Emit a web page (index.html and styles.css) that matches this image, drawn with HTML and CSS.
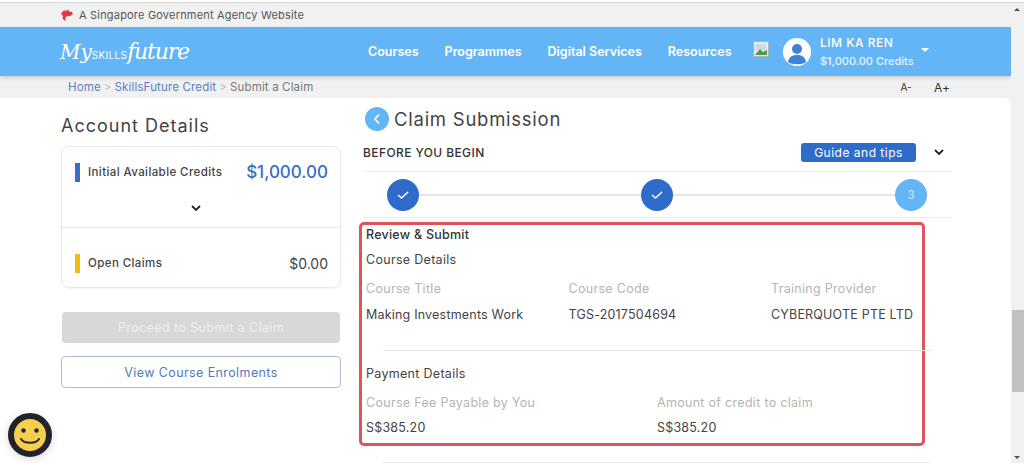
FILE: index.html
```html
<!DOCTYPE html>
<html lang="en">
<head>
    <meta charset="UTF-8">
    <meta name="viewport" content="width=device-width, initial-scale=1.0">
    <title>Claim Submission</title>
    <link rel="stylesheet" href="styles.css">
</head>
<body>
    <div class="window">
        <div class="page">
            <div class="gov-bar">
                <svg class="lion" width="13" height="12" viewBox="0 0 13 12"><path d="M1 5 L3 2 L6 1 L5 3 L8 .5 L9 2.5 L12 3 L13 5 L10 7 L6 7.5 L5 12 L2.5 9.5 L3 7 Z" fill="#e0383e"/></svg>
                <span>A Singapore Government Agency Website</span>
            </div>

            <header class="site-header">
                <a class="logo"><span class="logo-my">My</span><span class="logo-skills">SKILLS</span><span class="logo-future">future</span></a>
                <nav class="main-nav">
                    <a>Courses</a>
                    <a>Programmes</a>
                    <a>Digital Services</a>
                    <a>Resources</a>
                </nav>
                <svg class="broken-img" width="16" height="16" viewBox="0 0 16 16">
                    <rect x="0.5" y="0.5" width="15" height="15" fill="#e4e9ee" stroke="#a9b3bb"/>
                    <rect x="3" y="3" width="10" height="6" fill="#c6dcf2"/>
                    <path d="M2 14 L7 8 L10 11 L14 9 V14 Z" fill="#4c9a4a"/>
                </svg>
                <svg class="avatar" width="28" height="28" viewBox="0 0 28 28">
                    <circle cx="14" cy="14" r="14" fill="#fff"/>
                    <circle cx="14" cy="11" r="5" fill="#3f83d6"/>
                    <path d="M5 24 C6 18 10 17 14 17 C18 17 22 18 23 24 C20 27 8 27 5 24 Z" fill="#3f83d6"/>
                </svg>
                <div class="user">
                    <div class="user-name">LIM KA REN</div>
                    <div class="user-credits">$1,000.00 Credits</div>
                </div>
                <span class="user-caret"></span>
            </header>

            <div class="crumb-bar">
                <div class="crumbs">
                    <a>Home</a><span class="sep">&gt;</span><a>SkillsFuture Credit</a><span class="sep">&gt;</span><span>Submit a Claim</span>
                </div>
                <div class="font-size">
                    <span class="small-a">A-</span>
                    <span>A+</span>
                </div>
            </div>

            <main class="content">
                <aside class="account">
                    <h2>Account Details</h2>
                    <div class="credit-card">
                        <div class="credit-top">
                            <div class="credit-row">
                                <span class="bar bar-blue"></span>
                                <span class="credit-label">Initial Available Credits</span>
                                <span class="credit-big">$1,000.00</span>
                            </div>
                            <svg class="chev chev-center" width="10" height="7" viewBox="0 0 10 7"><path d="M1 1 L5 5 L9 1" fill="none" stroke="#222" stroke-width="1.8"/></svg>
                        </div>
                        <div class="credit-bottom">
                            <div class="credit-row">
                                <span class="bar bar-yellow"></span>
                                <span class="credit-label">Open Claims</span>
                                <span class="credit-small">$0.00</span>
                            </div>
                        </div>
                    </div>
                    <button class="btn-disabled">Proceed to Submit a Claim</button>
                    <button class="btn-outline">View Course Enrolments</button>
                </aside>

                <section class="claim">
                    <div class="claim-title">
                        <span class="back">
                            <svg width="8" height="12" viewBox="0 0 8 12"><path d="M6 1.5 L2 6 L6 10.5" fill="none" stroke="#fff" stroke-width="1.6"/></svg>
                        </span>
                        <h1>Claim Submission</h1>
                    </div>
                    <div class="begin-row">
                        <span class="begin">BEFORE YOU BEGIN</span>
                        <span class="guide">Guide and tips</span>
                        <svg class="chev" width="10" height="7" viewBox="0 0 10 7"><path d="M1 1 L5 5 L9 1" fill="none" stroke="#222" stroke-width="1.8"/></svg>
                    </div>
                    <div class="stepper">
                        <span class="step done"><svg width="14" height="10" viewBox="0 0 14 10"><path d="M2 5 L5.5 8 L12 2" fill="none" stroke="#fff" stroke-width="1.5"/></svg></span>
                        <span class="step-line"></span>
                        <span class="step done"><svg width="14" height="10" viewBox="0 0 14 10"><path d="M2 5 L5.5 8 L12 2" fill="none" stroke="#fff" stroke-width="1.5"/></svg></span>
                        <span class="step-line"></span>
                        <span class="step current">3</span>
                    </div>

                    <div class="review">
                        <h3>Review &amp; Submit</h3>
                        <h4>Course Details</h4>
                        <div class="fields fields-3">
                            <div class="field-label">Course Title</div>
                            <div class="field-label">Course Code</div>
                            <div class="field-label">Training Provider</div>
                            <div class="field-value">Making Investments Work</div>
                            <div class="field-value">TGS-2017504694</div>
                            <div class="field-value">CYBERQUOTE PTE LTD</div>
                        </div>
                        <hr class="review-rule">
                        <h4>Payment Details</h4>
                        <div class="fields fields-2">
                            <div class="field-label">Course Fee Payable by You</div>
                            <div class="field-label">Amount of credit to claim</div>
                            <div class="field-value">S$385.20</div>
                            <div class="field-value">S$385.20</div>
                        </div>
                    </div>
                    <hr class="bottom-rule">
                </section>
            </main>
        </div>

        <div class="scrollbar">
            <span class="arrow-up"></span>
            <span class="thumb"></span>
            <span class="arrow-down"></span>
        </div>
    </div>

    <div class="smiley">
        <svg width="44" height="44" viewBox="0 0 44 44">
            <circle cx="22" cy="22" r="19" fill="#f6cf4f" stroke="#23232b" stroke-width="6"/>
            <circle cx="15.5" cy="17.5" r="2.2" fill="#23232b"/>
            <circle cx="28.5" cy="17.5" r="2.2" fill="#23232b"/>
            <path d="M13 26 C16 31 28 31 31 26" fill="none" stroke="#23232b" stroke-width="2" stroke-linecap="round"/>
        </svg>
    </div>
</body>
</html>
```

FILE: styles.css
```css
* {
    box-sizing: border-box;
}

html, body {
    margin: 0;
    height: 463px;
    overflow: hidden;
}

body {
    font-family: Inter, "Open Sans", sans-serif;
    font-size: 12.5px;
    color: #444;
    background-color: #fff;
    padding-top: 2px;
}

.window {
    display: flex;
    height: 461px;
    border-top: 1px solid #d8d8d8;
}

.page {
    flex: 1;
    min-width: 0;
    background-color: #f1f1f1;
}

.gov-bar {
    display: flex;
    align-items: center;
    height: 24px;
    padding-left: 60px;
    gap: 6px;
    font-size: 11px;
    letter-spacing: 0.19px;
    color: #555;
}

.site-header {
    display: flex;
    align-items: center;
    height: 49px;
    padding-left: 60px;
    background-color: #64b5f6;
    color: #fff;
    box-shadow: 0 2px 4px rgba(0, 0, 0, 0.15);
}

.logo {
    display: flex;
    align-items: baseline;
    width: 308px;
    color: #fff;
    font-family: "DejaVu Serif", serif;
    font-style: italic;
}

.logo-my {
    font-size: 20px;
}

.logo-skills {
    font-family: Inter, sans-serif;
    font-style: normal;
    font-size: 10px;
    letter-spacing: 0.3px;
}

.logo-future {
    font-size: 22px;
    letter-spacing: -1.2px;
}

.main-nav {
    display: flex;
    gap: 26px;
    font-size: 12.5px;
    font-weight: 600;
    width: 385px;
}

.broken-img {
    margin-bottom: 6px;
}

.avatar {
    margin-left: 14px;
}

.user {
    margin-left: 9px;
    width: 101px;
}

.user-name {
    font-size: 12px;
    font-weight: 500;
    letter-spacing: 0.5px;
    margin-bottom: 4px;
}

.user-credits {
    font-size: 11px;
    font-weight: 500;
    color: #e6f3fd;
}

.user-caret {
    width: 0;
    height: 0;
    margin-bottom: 4px;
    border-left: 4px solid transparent;
    border-right: 4px solid transparent;
    border-top: 4px solid #fff;
}

.crumb-bar {
    display: flex;
    align-items: center;
    justify-content: space-between;
    height: 22px;
    padding-left: 68px;
    padding-right: 61px;
    font-size: 11.5px;
    letter-spacing: 0.15px;
    color: #777;
}

.crumbs a {
    color: #5b7fbf;
}

.sep {
    margin: 0 3px;
    color: #bbb;
}

.font-size {
    display: flex;
    gap: 22px;
    font-size: 12px;
    color: #333;
}

.small-a {
    font-size: 10px;
    line-height: 15px;
}

.content {
    display: flex;
    height: 365px;
    padding-left: 61px;
    background-color: #fff;
    border-radius: 0 6px 0 0;
    overflow: hidden;
}

.account {
    width: 280px;
    flex-shrink: 0;
}

.account h2 {
    margin: 17px 0 9px;
    font-size: 18px;
    line-height: 22px;
    font-weight: 400;
    letter-spacing: 1px;
    color: #444;
}

.credit-card {
    height: 142px;
    border: 1px solid #e8e8e8;
    border-radius: 8px;
    box-shadow: 0 1px 2px rgba(0, 0, 0, 0.05);
}

.credit-top {
    height: 81px;
    padding-top: 15px;
    border-bottom: 1px solid #e6e6e6;
}

.credit-bottom {
    padding-top: 25px;
}

.credit-row {
    display: flex;
    align-items: center;
    height: 20px;
    padding: 0 12px 0 13px;
}

.bar {
    width: 5px;
    height: 19px;
    margin-right: 8px;
}

.bar-blue {
    background-color: #3a6fc9;
}

.bar-yellow {
    background-color: #f2b90f;
}

.credit-label {
    flex: 1;
    font-size: 11.5px;
    font-weight: 500;
    letter-spacing: 0.4px;
    color: #444;
}

.credit-big {
    font-size: 17px;
    font-weight: 500;
    color: #3a6fc9;
}

.credit-small {
    font-size: 14px;
    font-weight: 400;
    color: #444;
}

.chev {
    display: block;
    flex-shrink: 0;
}

.chev-center {
    margin: 23px 0 0 129px;
}

.btn-disabled,
.btn-outline {
    display: block;
    font-family: inherit;
    font-size: 12.5px;
    letter-spacing: 0.4px;
    border-radius: 4px;
}

.btn-disabled {
    width: 278px;
    height: 31px;
    margin: 24px 1px 13px;
    border: none;
    color: #efefef;
    background-color: #d8d8d8;
}

.btn-outline {
    width: 280px;
    height: 32px;
    border: 1px solid #a9bfdc;
    color: #5279bf;
    background-color: #fff;
}

.claim {
    width: 589px;
    margin-left: 22px;
    flex-shrink: 0;
}

.claim-title {
    display: flex;
    align-items: center;
    gap: 5px;
    height: 24px;
    margin-top: 9px;
    margin-left: 2px;
}

.claim-title h1 {
    margin: 0;
    font-size: 18.5px;
    font-weight: 400;
    letter-spacing: 0.75px;
    color: #444;
}

.back {
    display: flex;
    align-items: center;
    justify-content: center;
    width: 24px;
    height: 24px;
    border-radius: 50%;
    background-color: #64b5f6;
}

.begin-row {
    display: flex;
    align-items: center;
    height: 38px;
    margin-top: 3px;
    border-bottom: 1px solid #ececec;
}

.begin {
    flex: 1;
    font-size: 12px;
    font-weight: 500;
    letter-spacing: 0.4px;
    color: #333;
}

.guide {
    width: 115px;
    height: 19px;
    line-height: 19px;
    text-align: center;
    font-size: 12px;
    letter-spacing: 0.5px;
    color: #fff;
    background-color: #2f6bcb;
    border-radius: 3px;
}

.begin-row .chev {
    margin-left: 18px;
    margin-right: 8px;
}

.stepper {
    display: flex;
    align-items: center;
    height: 46px;
    padding: 0 25px 0 24px;
    border-bottom: 1px solid #ececec;
}

.step {
    display: flex;
    align-items: center;
    justify-content: center;
    width: 32px;
    height: 32px;
    border-radius: 50%;
    flex-shrink: 0;
    color: #fff;
    font-size: 12px;
}

.step.done {
    background-color: #2f6bcb;
}

.step.current {
    background-color: #64b5f6;
    color: #cfe8fc;
}

.step-line {
    flex: 1;
    height: 2px;
    background-color: #e6e6e6;
}

.review {
    width: 566px;
    height: 224px;
    margin: 4px 0 0 -4px;
    padding: 2px 4px 0;
    border: 3px solid #e0535c;
    border-radius: 5px;
}

.review h3 {
    margin: 0;
    font-size: 12.5px;
    line-height: 16px;
    font-weight: 500;
    letter-spacing: 0.25px;
    color: #333;
}

.review h4 {
    margin: 9px 0 0;
    font-size: 12.5px;
    line-height: 16px;
    font-weight: 400;
    letter-spacing: 0.3px;
    color: #444;
}

.fields {
    display: grid;
    margin-top: 13px;
    row-gap: 10px;
}

.fields-3 {
    grid-template-columns: 202.5px 202.5px 1fr;
}

.fields-2 {
    grid-template-columns: 291px 1fr;
    row-gap: 9px;
}

.field-label {
    font-size: 12.5px;
    line-height: 16px;
    letter-spacing: 0.3px;
    color: #b5b5b5;
}

.field-value {
    font-size: 12.5px;
    line-height: 16px;
    letter-spacing: 0.2px;
    color: #444;
    white-space: nowrap;
}

.review-rule {
    width: 549px;
    height: 1px;
    margin: 27px 0 15px 17px;
    border: none;
    background-color: #e6e6e6;
}

.bottom-rule {
    width: 547px;
    height: 1px;
    margin: 16px 0 0 20px;
    border: none;
    background-color: #e6e6e6;
}

.scrollbar {
    position: relative;
    width: 13px;
    flex-shrink: 0;
    background-color: #f1f1f1;
}

.thumb {
    position: absolute;
    top: 307px;
    left: 1px;
    width: 12px;
    height: 82px;
    background-color: #c1c1c1;
}

.arrow-up,
.arrow-down {
    position: absolute;
    left: 3px;
    width: 0;
    height: 0;
    border-left: 3.5px solid transparent;
    border-right: 3.5px solid transparent;
}

.arrow-up {
    top: 5px;
    border-bottom: 3.5px solid #505050;
}

.arrow-down {
    bottom: 4px;
    border-top: 3.5px solid #505050;
}

.smiley {
    position: absolute;
    left: 8px;
    top: 413px;
    width: 44px;
    height: 44px;
    border-radius: 50%;
    box-shadow: 0 2px 8px rgba(0, 0, 0, 0.15);
}
```
